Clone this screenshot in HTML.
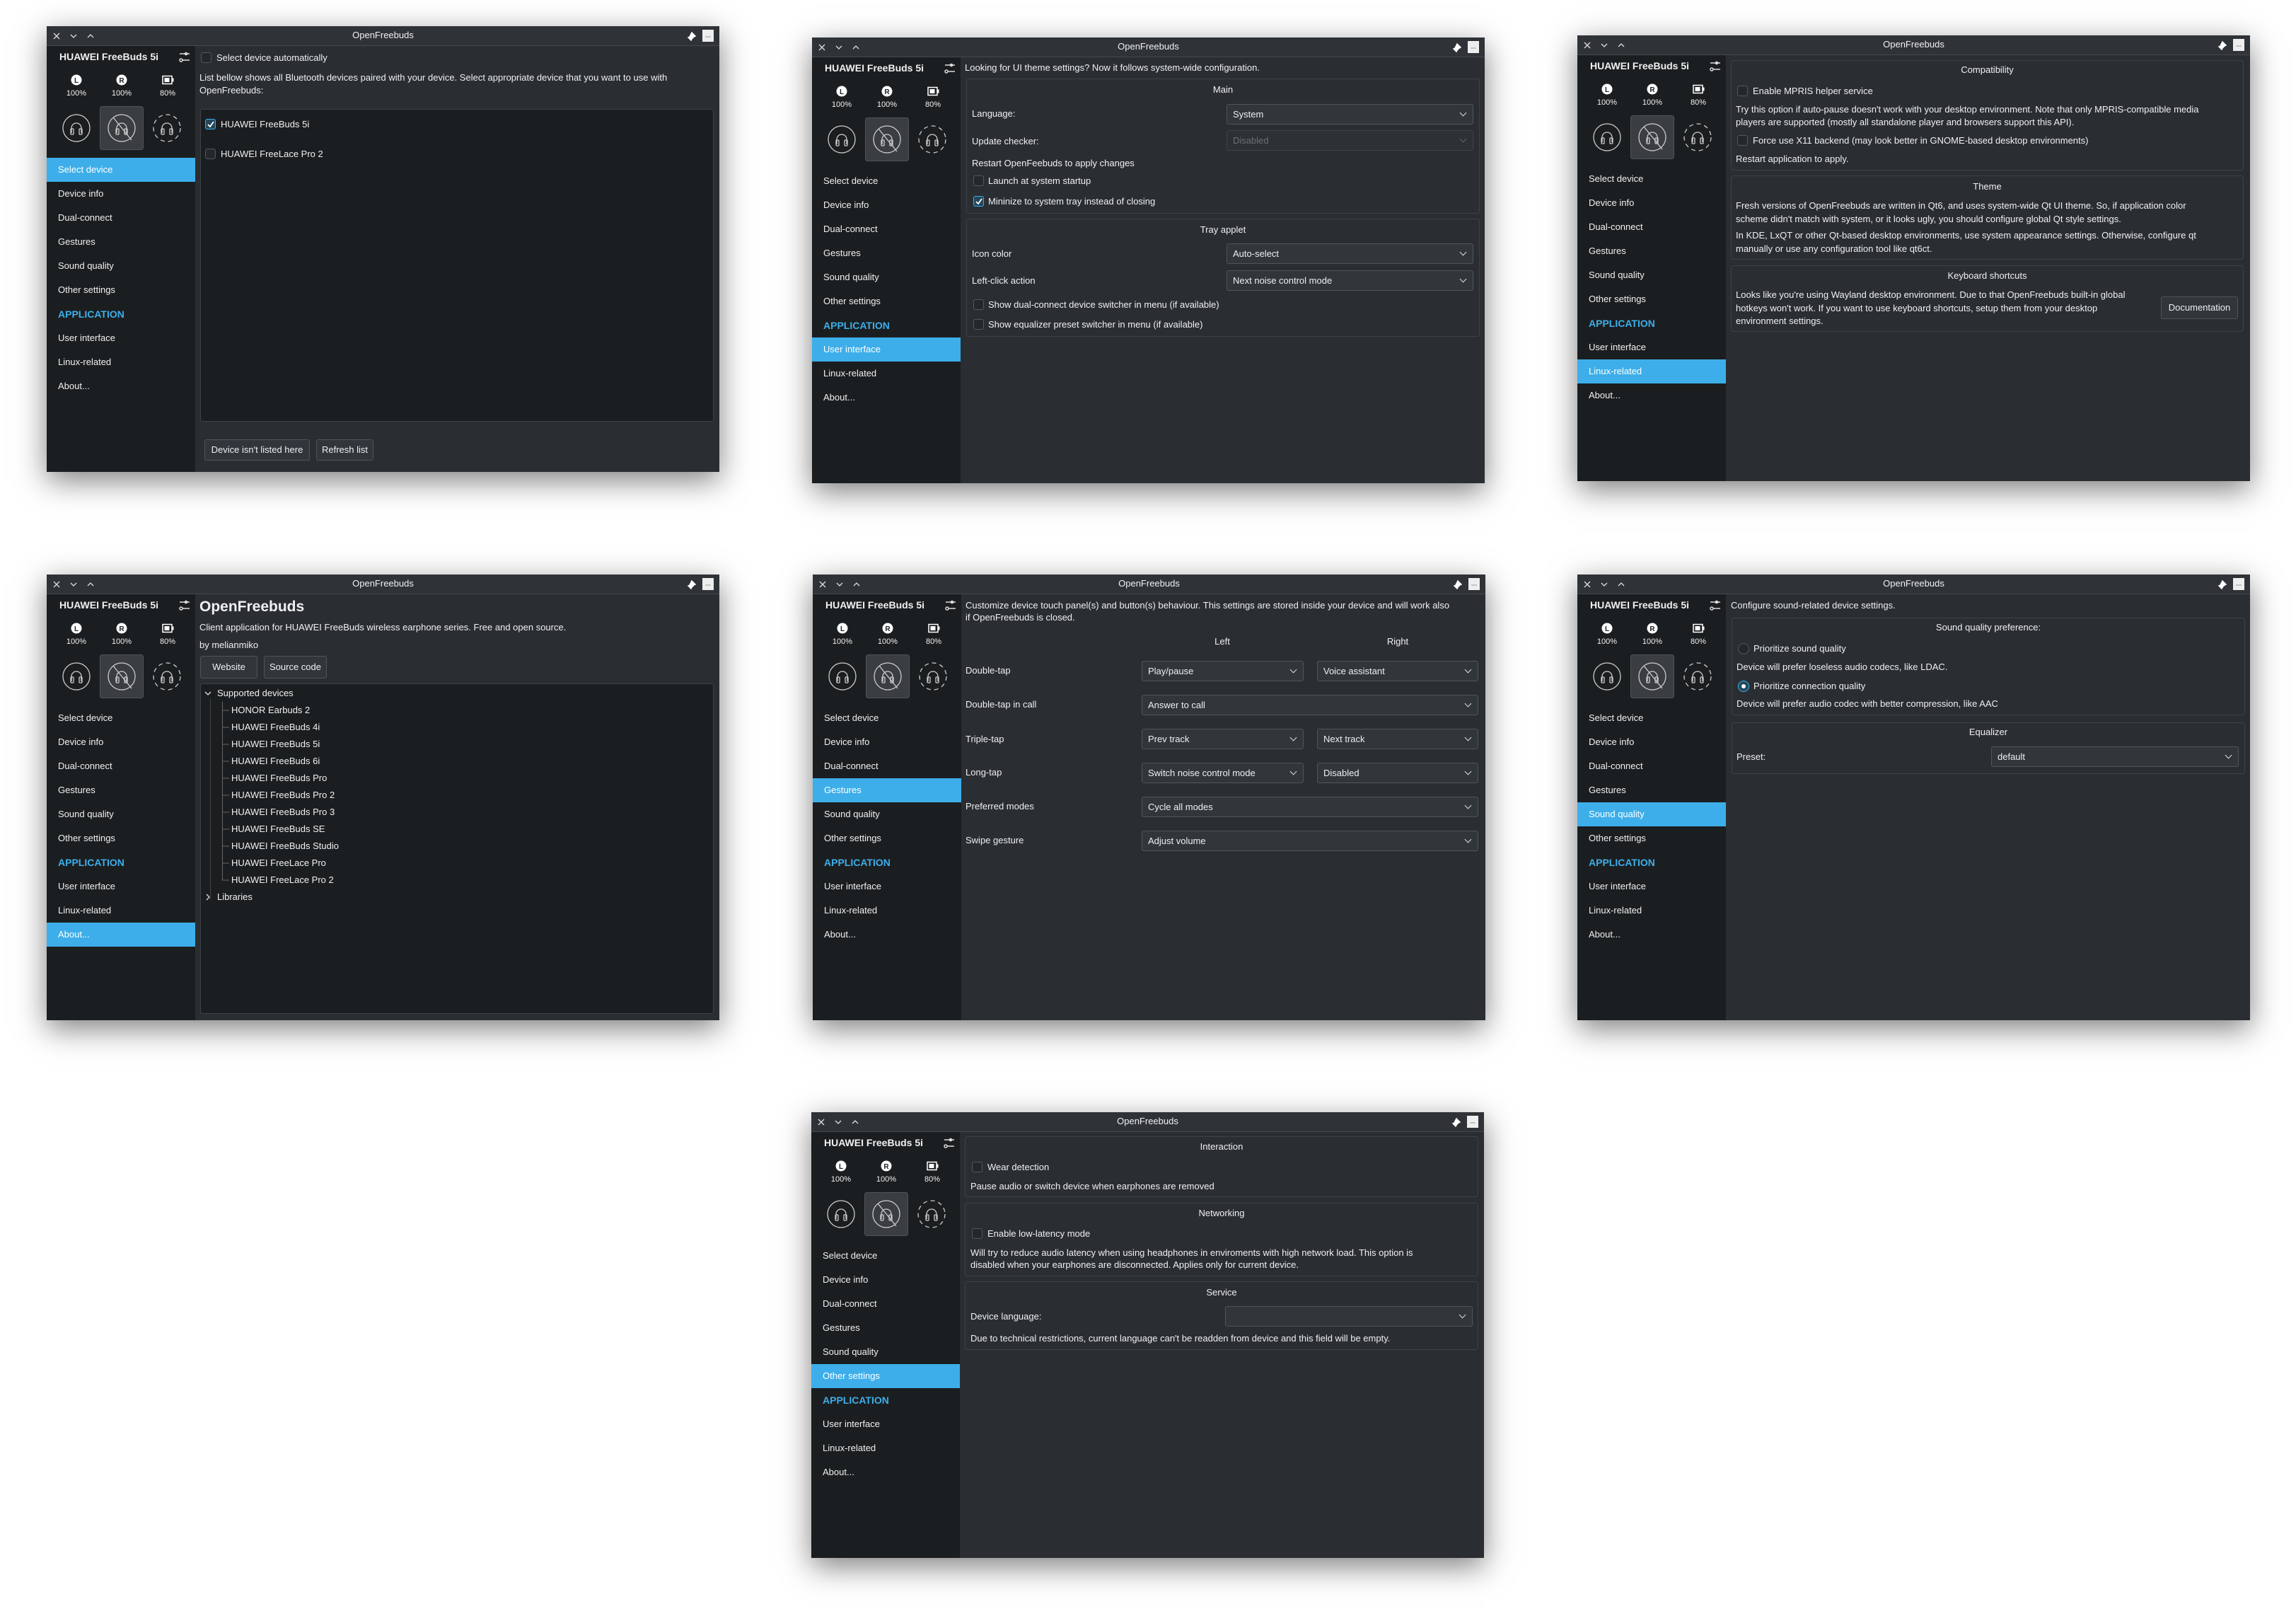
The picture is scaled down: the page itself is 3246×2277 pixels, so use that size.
<!DOCTYPE html>
<html><head><meta charset="utf-8"><style>
*{margin:0;padding:0;box-sizing:border-box}
html,body{width:3246px;height:2277px;background:#ffffff;overflow:hidden}
.w{position:absolute;width:951px;height:630px;background:#2a2e32;box-shadow:0 12px 40px rgba(0,0,0,.5);overflow:hidden;font-family:"Liberation Sans","DejaVu Sans",sans-serif;font-size:13px;color:#eff0f1}
.tb{position:absolute;left:0;top:0;width:951px;height:28px;background:#2f3338;border-bottom:1px solid #45494d}
.ttl{position:absolute;left:0;width:951px;top:5px;text-align:center;font-size:13px;color:#eff0f1}
.sb{position:absolute;left:0;top:28px;width:210px;height:602px;background:#1b1e20}
.sv{position:absolute;left:0;top:0}
.l{position:absolute;white-space:nowrap;line-height:18px}
.hd{font-weight:bold;font-size:14px}
.pc{position:absolute;width:60px;text-align:center;font-size:11px;top:89px;color:#eff0f1}
.nav{position:absolute;left:0;width:210px;height:34px;line-height:34px;padding-left:16px;font-size:13px}
.nav.s{background:#3daee9;color:#fff}
.nav.ap{color:#3daee9;font-weight:bold;font-size:14px}
.g{position:absolute;border:1px solid #3e4246;border-radius:4px}
.gt{position:absolute;text-align:center;white-space:nowrap;line-height:18px}
.cb{position:absolute;width:15px;height:15px;border:1px solid #54585c;border-radius:3px;background:#25282b}
.cb.on{border-color:#3daee9;background:#23475a}
.rd{position:absolute;width:16px;height:16px;border:1px solid #54585c;border-radius:50%;background:#25282b}
.rd.on{border-color:#3daee9;background:#23475a}
.rd.on::after{content:"";position:absolute;left:4px;top:4px;width:6px;height:6px;border-radius:50%;background:#fff}
.co{position:absolute;height:29px;background:#31363b;border:1px solid #50555a;border-radius:3px;line-height:27px;padding-left:8px;white-space:nowrap}
.co::after{content:"";position:absolute;right:10px;top:8px;width:6px;height:6px;border-right:1.3px solid #ddd;border-bottom:1.3px solid #ddd;transform:rotate(45deg)}
.co.dis{color:#6c7074;background:#2d3135;border-color:#3f4347}
.co.dis::after{border-color:#666}
.bt{position:absolute;background:#31363b;border:1px solid #50555a;border-radius:3px;text-align:center;white-space:nowrap}
.box{position:absolute;background:#1b1e20;border:1px solid #3e4246;border-radius:3px}
</style></head><body>

<!-- ===== W1 Select device ===== -->
<div class="w" style="left:66px;top:37px">
<div class="tb"></div>
<svg class="sv" width="951" height="28"><g stroke="#ddd" stroke-width="1.3" fill="none"><path d="M10 10l8 8M18 10l-8 8"/><path d="M34 12l4 4 4-4"/><path d="M58 16l4-4 4 4"/></g><path d="M909 19l5-5M912 9l5 5-2 1-3 3-1 2-4-4 2-1z" stroke="#fff" stroke-width="1.5" fill="#fff"/><rect x="927" y="5" width="16" height="17" fill="#eee"/><line x1="931" y1="15" x2="939" y2="15" stroke="#999"/></svg>
<div class="ttl">OpenFreebuds</div>
<div class="sb"></div>
<svg class="sv" width="210" height="200"><g stroke="#ddd" stroke-width="1.5" fill="none"><line x1="188" y1="39" x2="202" y2="39"/><line x1="192" y1="48" x2="202" y2="48"/><circle cx="190" cy="48" r="2"/></g><circle cx="197" cy="39" r="2.3" fill="#ddd"/><circle cx="42" cy="76" r="7.5" fill="#fff"/><text x="42" y="80" font-size="10" font-weight="bold" text-anchor="middle" fill="#1b1e20" font-family="Liberation Sans">L</text><circle cx="106" cy="76" r="7.5" fill="#fff"/><text x="106" y="80" font-size="10" font-weight="bold" text-anchor="middle" fill="#1b1e20" font-family="Liberation Sans">R</text><rect x="164" y="70.5" width="13" height="11" fill="none" stroke="#fff" stroke-width="1.5"/><rect x="166.5" y="73" width="7" height="6" fill="#fff"/><rect x="177.5" y="73.5" width="2" height="5" fill="#fff"/><rect x="75.5" y="113.5" width="61" height="61" rx="3" fill="#3a3d41" stroke="#505458"/><g stroke="#ccc" stroke-width="1.3" fill="none"><circle cx="42" cy="144" r="19"/><path d="M35 151v-7a7 7 0 0 1 14 0v7"/><rect x="34" y="145" width="4" height="8" rx="1"/><rect x="46" y="145" width="4" height="8" rx="1"/><circle cx="106" cy="144" r="19"/><path d="M99 151v-7a7 7 0 0 1 14 0v7"/><rect x="98" y="145" width="4" height="8" rx="1"/><rect x="110" y="145" width="4" height="8" rx="1"/><line x1="94" y1="129" x2="120" y2="161"/><circle cx="170" cy="144" r="19" stroke-dasharray="6 5"/><path d="M163 151v-7a7 7 0 0 1 14 0v7"/><rect x="162" y="145" width="4" height="8" rx="1"/><rect x="174" y="145" width="4" height="8" rx="1"/></g></svg>
<div class="l hd" style="left:18px;top:34px">HUAWEI FreeBuds 5i</div>
<div class="pc" style="left:12px">100%</div><div class="pc" style="left:76px">100%</div><div class="pc" style="left:141px">80%</div>
<div class="nav s" style="top:186px">Select device</div><div class="nav" style="top:220px">Device info</div><div class="nav" style="top:254px">Dual-connect</div><div class="nav" style="top:288px">Gestures</div><div class="nav" style="top:322px">Sound quality</div><div class="nav" style="top:356px">Other settings</div><div class="nav ap" style="top:390px">APPLICATION</div><div class="nav" style="top:424px">User interface</div><div class="nav" style="top:458px">Linux-related</div><div class="nav" style="top:492px">About...</div>
<div class="cb" style="left:218px;top:37px"></div><div class="l" style="left:240px;top:36px">Select device automatically</div>
<div class="l" style="left:216px;top:64px">List bellow shows all Bluetooth devices paired with your device. Select appropriate device that you want to use with</div>
<div class="l" style="left:216px;top:82px">OpenFreebuds:</div>
<div class="box" style="left:217px;top:117px;width:726px;height:442px"></div>
<div class="cb on" style="left:224px;top:131px"><svg width="13" height="13" style="position:absolute;left:0;top:0"><path d="M3 7l3 3 5-7" stroke="#fff" stroke-width="1.8" fill="none"/></svg></div><div class="l" style="left:246px;top:130px">HUAWEI FreeBuds 5i</div>
<div class="cb" style="left:224px;top:173px"></div><div class="l" style="left:246px;top:172px">HUAWEI FreeLace Pro 2</div>
<div class="bt" style="left:223px;top:584px;width:149px;height:30px;line-height:28px">Device isn't listed here</div>
<div class="bt" style="left:381px;top:584px;width:81px;height:30px;line-height:28px">Refresh list</div>
</div>

<!-- ===== W2 User interface ===== -->
<div class="w" style="left:1148px;top:53px">
<div class="tb"></div>
<svg class="sv" width="951" height="28"><g stroke="#ddd" stroke-width="1.3" fill="none"><path d="M10 10l8 8M18 10l-8 8"/><path d="M34 12l4 4 4-4"/><path d="M58 16l4-4 4 4"/></g><path d="M909 19l5-5M912 9l5 5-2 1-3 3-1 2-4-4 2-1z" stroke="#fff" stroke-width="1.5" fill="#fff"/><rect x="927" y="5" width="16" height="17" fill="#eee"/><line x1="931" y1="15" x2="939" y2="15" stroke="#999"/></svg>
<div class="ttl">OpenFreebuds</div>
<div class="sb"></div>
<svg class="sv" width="210" height="200"><g stroke="#ddd" stroke-width="1.5" fill="none"><line x1="188" y1="39" x2="202" y2="39"/><line x1="192" y1="48" x2="202" y2="48"/><circle cx="190" cy="48" r="2"/></g><circle cx="197" cy="39" r="2.3" fill="#ddd"/><circle cx="42" cy="76" r="7.5" fill="#fff"/><text x="42" y="80" font-size="10" font-weight="bold" text-anchor="middle" fill="#1b1e20" font-family="Liberation Sans">L</text><circle cx="106" cy="76" r="7.5" fill="#fff"/><text x="106" y="80" font-size="10" font-weight="bold" text-anchor="middle" fill="#1b1e20" font-family="Liberation Sans">R</text><rect x="164" y="70.5" width="13" height="11" fill="none" stroke="#fff" stroke-width="1.5"/><rect x="166.5" y="73" width="7" height="6" fill="#fff"/><rect x="177.5" y="73.5" width="2" height="5" fill="#fff"/><rect x="75.5" y="113.5" width="61" height="61" rx="3" fill="#3a3d41" stroke="#505458"/><g stroke="#ccc" stroke-width="1.3" fill="none"><circle cx="42" cy="144" r="19"/><path d="M35 151v-7a7 7 0 0 1 14 0v7"/><rect x="34" y="145" width="4" height="8" rx="1"/><rect x="46" y="145" width="4" height="8" rx="1"/><circle cx="106" cy="144" r="19"/><path d="M99 151v-7a7 7 0 0 1 14 0v7"/><rect x="98" y="145" width="4" height="8" rx="1"/><rect x="110" y="145" width="4" height="8" rx="1"/><line x1="94" y1="129" x2="120" y2="161"/><circle cx="170" cy="144" r="19" stroke-dasharray="6 5"/><path d="M163 151v-7a7 7 0 0 1 14 0v7"/><rect x="162" y="145" width="4" height="8" rx="1"/><rect x="174" y="145" width="4" height="8" rx="1"/></g></svg>
<div class="l hd" style="left:18px;top:34px">HUAWEI FreeBuds 5i</div>
<div class="pc" style="left:12px">100%</div><div class="pc" style="left:76px">100%</div><div class="pc" style="left:141px">80%</div>
<div class="nav" style="top:186px">Select device</div><div class="nav" style="top:220px">Device info</div><div class="nav" style="top:254px">Dual-connect</div><div class="nav" style="top:288px">Gestures</div><div class="nav" style="top:322px">Sound quality</div><div class="nav" style="top:356px">Other settings</div><div class="nav ap" style="top:390px">APPLICATION</div><div class="nav s" style="top:424px">User interface</div><div class="nav" style="top:458px">Linux-related</div><div class="nav" style="top:492px">About...</div>
<div class="l" style="left:216px;top:34px">Looking for UI theme settings? Now it follows system-wide configuration.</div>
<div class="g" style="left:218px;top:58px;width:726px;height:191px"></div>
<div class="gt" style="left:218px;width:726px;top:65px">Main</div>
<div class="l" style="left:226px;top:99px">Language:</div><div class="co" style="left:586px;top:94px;width:349px">System</div>
<div class="l" style="left:226px;top:138px">Update checker:</div><div class="co dis" style="left:586px;top:131px;width:349px">Disabled</div>
<div class="l" style="left:226px;top:169px">Restart OpenFeebuds to apply changes</div>
<div class="cb" style="left:228px;top:195px"></div><div class="l" style="left:249px;top:194px">Launch at system startup</div>
<div class="cb on" style="left:228px;top:224px"><svg width="13" height="13" style="position:absolute;left:0;top:0"><path d="M3 7l3 3 5-7" stroke="#fff" stroke-width="1.8" fill="none"/></svg></div><div class="l" style="left:249px;top:223px">Mininize to system tray instead of closing</div>
<div class="g" style="left:218px;top:256px;width:726px;height:167px"></div>
<div class="gt" style="left:218px;width:726px;top:263px">Tray applet</div>
<div class="l" style="left:226px;top:297px">Icon color</div><div class="co" style="left:586px;top:291px;width:349px">Auto-select</div>
<div class="l" style="left:226px;top:335px">Left-click action</div><div class="co" style="left:586px;top:329px;width:349px">Next noise control mode</div>
<div class="cb" style="left:228px;top:370px"></div><div class="l" style="left:249px;top:369px">Show dual-connect device switcher in menu (if available)</div>
<div class="cb" style="left:228px;top:398px"></div><div class="l" style="left:249px;top:397px">Show equalizer preset switcher in menu (if available)</div>
</div>

<!-- ===== W3 Linux-related ===== -->
<div class="w" style="left:2230px;top:50px">
<div class="tb"></div>
<svg class="sv" width="951" height="28"><g stroke="#ddd" stroke-width="1.3" fill="none"><path d="M10 10l8 8M18 10l-8 8"/><path d="M34 12l4 4 4-4"/><path d="M58 16l4-4 4 4"/></g><path d="M909 19l5-5M912 9l5 5-2 1-3 3-1 2-4-4 2-1z" stroke="#fff" stroke-width="1.5" fill="#fff"/><rect x="927" y="5" width="16" height="17" fill="#eee"/><line x1="931" y1="15" x2="939" y2="15" stroke="#999"/></svg>
<div class="ttl">OpenFreebuds</div>
<div class="sb"></div>
<svg class="sv" width="210" height="200"><g stroke="#ddd" stroke-width="1.5" fill="none"><line x1="188" y1="39" x2="202" y2="39"/><line x1="192" y1="48" x2="202" y2="48"/><circle cx="190" cy="48" r="2"/></g><circle cx="197" cy="39" r="2.3" fill="#ddd"/><circle cx="42" cy="76" r="7.5" fill="#fff"/><text x="42" y="80" font-size="10" font-weight="bold" text-anchor="middle" fill="#1b1e20" font-family="Liberation Sans">L</text><circle cx="106" cy="76" r="7.5" fill="#fff"/><text x="106" y="80" font-size="10" font-weight="bold" text-anchor="middle" fill="#1b1e20" font-family="Liberation Sans">R</text><rect x="164" y="70.5" width="13" height="11" fill="none" stroke="#fff" stroke-width="1.5"/><rect x="166.5" y="73" width="7" height="6" fill="#fff"/><rect x="177.5" y="73.5" width="2" height="5" fill="#fff"/><rect x="75.5" y="113.5" width="61" height="61" rx="3" fill="#3a3d41" stroke="#505458"/><g stroke="#ccc" stroke-width="1.3" fill="none"><circle cx="42" cy="144" r="19"/><path d="M35 151v-7a7 7 0 0 1 14 0v7"/><rect x="34" y="145" width="4" height="8" rx="1"/><rect x="46" y="145" width="4" height="8" rx="1"/><circle cx="106" cy="144" r="19"/><path d="M99 151v-7a7 7 0 0 1 14 0v7"/><rect x="98" y="145" width="4" height="8" rx="1"/><rect x="110" y="145" width="4" height="8" rx="1"/><line x1="94" y1="129" x2="120" y2="161"/><circle cx="170" cy="144" r="19" stroke-dasharray="6 5"/><path d="M163 151v-7a7 7 0 0 1 14 0v7"/><rect x="162" y="145" width="4" height="8" rx="1"/><rect x="174" y="145" width="4" height="8" rx="1"/></g></svg>
<div class="l hd" style="left:18px;top:34px">HUAWEI FreeBuds 5i</div>
<div class="pc" style="left:12px">100%</div><div class="pc" style="left:76px">100%</div><div class="pc" style="left:141px">80%</div>
<div class="nav" style="top:186px">Select device</div><div class="nav" style="top:220px">Device info</div><div class="nav" style="top:254px">Dual-connect</div><div class="nav" style="top:288px">Gestures</div><div class="nav" style="top:322px">Sound quality</div><div class="nav" style="top:356px">Other settings</div><div class="nav ap" style="top:390px">APPLICATION</div><div class="nav" style="top:424px">User interface</div><div class="nav s" style="top:458px">Linux-related</div><div class="nav" style="top:492px">About...</div>
<div class="g" style="left:217px;top:35px;width:725px;height:156px"></div>
<div class="gt" style="left:217px;width:725px;top:40px">Compatibility</div>
<div class="cb" style="left:226px;top:71px"></div><div class="l" style="left:248px;top:70px">Enable MPRIS helper service</div>
<div class="l" style="left:224px;top:96px">Try this option if auto-pause doesn't work with your desktop environment. Note that only MPRIS-compatible media</div>
<div class="l" style="left:224px;top:114px">players are supported (mostly all standalone player and browsers support this API).</div>
<div class="cb" style="left:226px;top:141px"></div><div class="l" style="left:248px;top:140px">Force use X11 backend (may look better in GNOME-based desktop environments)</div>
<div class="l" style="left:224px;top:166px">Restart application to apply.</div>
<div class="g" style="left:217px;top:198px;width:725px;height:119px"></div>
<div class="gt" style="left:217px;width:725px;top:205px">Theme</div>
<div class="l" style="left:224px;top:232px">Fresh versions of OpenFreebuds are written in Qt6, and uses system-wide Qt UI theme. So, if application color</div>
<div class="l" style="left:224px;top:251px">scheme didn't match with system, or it looks ugly, you should configure global Qt style settings.</div>
<div class="l" style="left:224px;top:274px">In KDE, LxQT or other Qt-based desktop environments, use system appearance settings. Otherwise, configure qt</div>
<div class="l" style="left:224px;top:293px">manually or use any configuration tool like qt6ct.</div>
<div class="g" style="left:217px;top:325px;width:725px;height:94px"></div>
<div class="gt" style="left:217px;width:725px;top:331px">Keyboard shortcuts</div>
<div class="l" style="left:224px;top:358px">Looks like you're using Wayland desktop environment. Due to that OpenFreebuds built-in global</div>
<div class="l" style="left:224px;top:377px">hotkeys won't work. If you want to use keyboard shortcuts, setup them from your desktop</div>
<div class="l" style="left:224px;top:395px">environment settings.</div>
<div class="bt" style="left:825px;top:369px;width:109px;height:32px;line-height:30px">Documentation</div>
</div>

<!-- ===== W4 About ===== -->
<div class="w" style="left:66px;top:812px">
<div class="tb"></div>
<svg class="sv" width="951" height="28"><g stroke="#ddd" stroke-width="1.3" fill="none"><path d="M10 10l8 8M18 10l-8 8"/><path d="M34 12l4 4 4-4"/><path d="M58 16l4-4 4 4"/></g><path d="M909 19l5-5M912 9l5 5-2 1-3 3-1 2-4-4 2-1z" stroke="#fff" stroke-width="1.5" fill="#fff"/><rect x="927" y="5" width="16" height="17" fill="#eee"/><line x1="931" y1="15" x2="939" y2="15" stroke="#999"/></svg>
<div class="ttl">OpenFreebuds</div>
<div class="sb"></div>
<svg class="sv" width="210" height="200"><g stroke="#ddd" stroke-width="1.5" fill="none"><line x1="188" y1="39" x2="202" y2="39"/><line x1="192" y1="48" x2="202" y2="48"/><circle cx="190" cy="48" r="2"/></g><circle cx="197" cy="39" r="2.3" fill="#ddd"/><circle cx="42" cy="76" r="7.5" fill="#fff"/><text x="42" y="80" font-size="10" font-weight="bold" text-anchor="middle" fill="#1b1e20" font-family="Liberation Sans">L</text><circle cx="106" cy="76" r="7.5" fill="#fff"/><text x="106" y="80" font-size="10" font-weight="bold" text-anchor="middle" fill="#1b1e20" font-family="Liberation Sans">R</text><rect x="164" y="70.5" width="13" height="11" fill="none" stroke="#fff" stroke-width="1.5"/><rect x="166.5" y="73" width="7" height="6" fill="#fff"/><rect x="177.5" y="73.5" width="2" height="5" fill="#fff"/><rect x="75.5" y="113.5" width="61" height="61" rx="3" fill="#3a3d41" stroke="#505458"/><g stroke="#ccc" stroke-width="1.3" fill="none"><circle cx="42" cy="144" r="19"/><path d="M35 151v-7a7 7 0 0 1 14 0v7"/><rect x="34" y="145" width="4" height="8" rx="1"/><rect x="46" y="145" width="4" height="8" rx="1"/><circle cx="106" cy="144" r="19"/><path d="M99 151v-7a7 7 0 0 1 14 0v7"/><rect x="98" y="145" width="4" height="8" rx="1"/><rect x="110" y="145" width="4" height="8" rx="1"/><line x1="94" y1="129" x2="120" y2="161"/><circle cx="170" cy="144" r="19" stroke-dasharray="6 5"/><path d="M163 151v-7a7 7 0 0 1 14 0v7"/><rect x="162" y="145" width="4" height="8" rx="1"/><rect x="174" y="145" width="4" height="8" rx="1"/></g></svg>
<div class="l hd" style="left:18px;top:34px">HUAWEI FreeBuds 5i</div>
<div class="pc" style="left:12px">100%</div><div class="pc" style="left:76px">100%</div><div class="pc" style="left:141px">80%</div>
<div class="nav" style="top:186px">Select device</div><div class="nav" style="top:220px">Device info</div><div class="nav" style="top:254px">Dual-connect</div><div class="nav" style="top:288px">Gestures</div><div class="nav" style="top:322px">Sound quality</div><div class="nav" style="top:356px">Other settings</div><div class="nav ap" style="top:390px">APPLICATION</div><div class="nav" style="top:424px">User interface</div><div class="nav" style="top:458px">Linux-related</div><div class="nav s" style="top:492px">About...</div>
<div class="l" style="left:216px;top:33px;font-size:21px;font-weight:bold;line-height:26px">OpenFreebuds</div>
<div class="l" style="left:216px;top:66px">Client application for HUAWEI FreeBuds wireless earphone series. Free and open source.</div>
<div class="l" style="left:216px;top:91px">by melianmiko</div>
<div class="bt" style="left:217px;top:115px;width:81px;height:32px;line-height:30px">Website</div>
<div class="bt" style="left:307px;top:115px;width:89px;height:32px;line-height:30px">Source code</div>
<div class="box" style="left:217px;top:154px;width:726px;height:467px"></div>
<svg class="sv" width="951" height="630"><g stroke="#666" stroke-width="1" fill="none"><line x1="231.5" y1="176" x2="231.5" y2="460" stroke="#444"/><line x1="248.5" y1="180" x2="248.5" y2="432"/><path d="M248 192h10M248 216h10M248 240h10M248 264h10M248 288h10M248 312h10M248 336h10M248 360h10M248 384h10M248 408h10M248 432h10"/></g><path d="M224 166l4 4 4-4" stroke="#ddd" stroke-width="1.3" fill="none"/><path d="M226 452l4 4-4 4" stroke="#ddd" stroke-width="1.3" fill="none"/></svg>
<div class="l" style="left:241px;top:159px">Supported devices</div>
<div class="l" style="left:261px;top:183px">HONOR Earbuds 2</div>
<div class="l" style="left:261px;top:207px">HUAWEI FreeBuds 4i</div>
<div class="l" style="left:261px;top:231px">HUAWEI FreeBuds 5i</div>
<div class="l" style="left:261px;top:255px">HUAWEI FreeBuds 6i</div>
<div class="l" style="left:261px;top:279px">HUAWEI FreeBuds Pro</div>
<div class="l" style="left:261px;top:303px">HUAWEI FreeBuds Pro 2</div>
<div class="l" style="left:261px;top:327px">HUAWEI FreeBuds Pro 3</div>
<div class="l" style="left:261px;top:351px">HUAWEI FreeBuds SE</div>
<div class="l" style="left:261px;top:375px">HUAWEI FreeBuds Studio</div>
<div class="l" style="left:261px;top:399px">HUAWEI FreeLace Pro</div>
<div class="l" style="left:261px;top:423px">HUAWEI FreeLace Pro 2</div>
<div class="l" style="left:241px;top:447px">Libraries</div>
</div>

<!-- ===== W5 Gestures ===== -->
<div class="w" style="left:1149px;top:812px">
<div class="tb"></div>
<svg class="sv" width="951" height="28"><g stroke="#ddd" stroke-width="1.3" fill="none"><path d="M10 10l8 8M18 10l-8 8"/><path d="M34 12l4 4 4-4"/><path d="M58 16l4-4 4 4"/></g><path d="M909 19l5-5M912 9l5 5-2 1-3 3-1 2-4-4 2-1z" stroke="#fff" stroke-width="1.5" fill="#fff"/><rect x="927" y="5" width="16" height="17" fill="#eee"/><line x1="931" y1="15" x2="939" y2="15" stroke="#999"/></svg>
<div class="ttl">OpenFreebuds</div>
<div class="sb"></div>
<svg class="sv" width="210" height="200"><g stroke="#ddd" stroke-width="1.5" fill="none"><line x1="188" y1="39" x2="202" y2="39"/><line x1="192" y1="48" x2="202" y2="48"/><circle cx="190" cy="48" r="2"/></g><circle cx="197" cy="39" r="2.3" fill="#ddd"/><circle cx="42" cy="76" r="7.5" fill="#fff"/><text x="42" y="80" font-size="10" font-weight="bold" text-anchor="middle" fill="#1b1e20" font-family="Liberation Sans">L</text><circle cx="106" cy="76" r="7.5" fill="#fff"/><text x="106" y="80" font-size="10" font-weight="bold" text-anchor="middle" fill="#1b1e20" font-family="Liberation Sans">R</text><rect x="164" y="70.5" width="13" height="11" fill="none" stroke="#fff" stroke-width="1.5"/><rect x="166.5" y="73" width="7" height="6" fill="#fff"/><rect x="177.5" y="73.5" width="2" height="5" fill="#fff"/><rect x="75.5" y="113.5" width="61" height="61" rx="3" fill="#3a3d41" stroke="#505458"/><g stroke="#ccc" stroke-width="1.3" fill="none"><circle cx="42" cy="144" r="19"/><path d="M35 151v-7a7 7 0 0 1 14 0v7"/><rect x="34" y="145" width="4" height="8" rx="1"/><rect x="46" y="145" width="4" height="8" rx="1"/><circle cx="106" cy="144" r="19"/><path d="M99 151v-7a7 7 0 0 1 14 0v7"/><rect x="98" y="145" width="4" height="8" rx="1"/><rect x="110" y="145" width="4" height="8" rx="1"/><line x1="94" y1="129" x2="120" y2="161"/><circle cx="170" cy="144" r="19" stroke-dasharray="6 5"/><path d="M163 151v-7a7 7 0 0 1 14 0v7"/><rect x="162" y="145" width="4" height="8" rx="1"/><rect x="174" y="145" width="4" height="8" rx="1"/></g></svg>
<div class="l hd" style="left:18px;top:34px">HUAWEI FreeBuds 5i</div>
<div class="pc" style="left:12px">100%</div><div class="pc" style="left:76px">100%</div><div class="pc" style="left:141px">80%</div>
<div class="nav" style="top:186px">Select device</div><div class="nav" style="top:220px">Device info</div><div class="nav" style="top:254px">Dual-connect</div><div class="nav s" style="top:288px">Gestures</div><div class="nav" style="top:322px">Sound quality</div><div class="nav" style="top:356px">Other settings</div><div class="nav ap" style="top:390px">APPLICATION</div><div class="nav" style="top:424px">User interface</div><div class="nav" style="top:458px">Linux-related</div><div class="nav" style="top:492px">About...</div>
<div class="l" style="left:216px;top:35px">Customize device touch panel(s) and button(s) behaviour. This settings are stored inside your device and will work also</div>
<div class="l" style="left:216px;top:52px">if OpenFreebuds is closed.</div>
<div class="gt" style="left:529px;width:100px;top:86px">Left</div>
<div class="gt" style="left:777px;width:100px;top:86px">Right</div>
<div class="l" style="left:216px;top:127px">Double-tap</div><div class="co" style="left:465px;top:122px;width:229px">Play/pause</div><div class="co" style="left:713px;top:122px;width:228px">Voice assistant</div>
<div class="l" style="left:216px;top:175px">Double-tap in call</div><div class="co" style="left:465px;top:170px;width:476px">Answer to call</div>
<div class="l" style="left:216px;top:224px">Triple-tap</div><div class="co" style="left:465px;top:218px;width:229px">Prev track</div><div class="co" style="left:713px;top:218px;width:228px">Next track</div>
<div class="l" style="left:216px;top:271px">Long-tap</div><div class="co" style="left:465px;top:266px;width:229px">Switch noise control mode</div><div class="co" style="left:713px;top:266px;width:228px">Disabled</div>
<div class="l" style="left:216px;top:319px">Preferred modes</div><div class="co" style="left:465px;top:314px;width:476px">Cycle all modes</div>
<div class="l" style="left:216px;top:367px">Swipe gesture</div><div class="co" style="left:465px;top:362px;width:476px">Adjust volume</div>
</div>

<!-- ===== W6 Sound quality ===== -->
<div class="w" style="left:2230px;top:812px">
<div class="tb"></div>
<svg class="sv" width="951" height="28"><g stroke="#ddd" stroke-width="1.3" fill="none"><path d="M10 10l8 8M18 10l-8 8"/><path d="M34 12l4 4 4-4"/><path d="M58 16l4-4 4 4"/></g><path d="M909 19l5-5M912 9l5 5-2 1-3 3-1 2-4-4 2-1z" stroke="#fff" stroke-width="1.5" fill="#fff"/><rect x="927" y="5" width="16" height="17" fill="#eee"/><line x1="931" y1="15" x2="939" y2="15" stroke="#999"/></svg>
<div class="ttl">OpenFreebuds</div>
<div class="sb"></div>
<svg class="sv" width="210" height="200"><g stroke="#ddd" stroke-width="1.5" fill="none"><line x1="188" y1="39" x2="202" y2="39"/><line x1="192" y1="48" x2="202" y2="48"/><circle cx="190" cy="48" r="2"/></g><circle cx="197" cy="39" r="2.3" fill="#ddd"/><circle cx="42" cy="76" r="7.5" fill="#fff"/><text x="42" y="80" font-size="10" font-weight="bold" text-anchor="middle" fill="#1b1e20" font-family="Liberation Sans">L</text><circle cx="106" cy="76" r="7.5" fill="#fff"/><text x="106" y="80" font-size="10" font-weight="bold" text-anchor="middle" fill="#1b1e20" font-family="Liberation Sans">R</text><rect x="164" y="70.5" width="13" height="11" fill="none" stroke="#fff" stroke-width="1.5"/><rect x="166.5" y="73" width="7" height="6" fill="#fff"/><rect x="177.5" y="73.5" width="2" height="5" fill="#fff"/><rect x="75.5" y="113.5" width="61" height="61" rx="3" fill="#3a3d41" stroke="#505458"/><g stroke="#ccc" stroke-width="1.3" fill="none"><circle cx="42" cy="144" r="19"/><path d="M35 151v-7a7 7 0 0 1 14 0v7"/><rect x="34" y="145" width="4" height="8" rx="1"/><rect x="46" y="145" width="4" height="8" rx="1"/><circle cx="106" cy="144" r="19"/><path d="M99 151v-7a7 7 0 0 1 14 0v7"/><rect x="98" y="145" width="4" height="8" rx="1"/><rect x="110" y="145" width="4" height="8" rx="1"/><line x1="94" y1="129" x2="120" y2="161"/><circle cx="170" cy="144" r="19" stroke-dasharray="6 5"/><path d="M163 151v-7a7 7 0 0 1 14 0v7"/><rect x="162" y="145" width="4" height="8" rx="1"/><rect x="174" y="145" width="4" height="8" rx="1"/></g></svg>
<div class="l hd" style="left:18px;top:34px">HUAWEI FreeBuds 5i</div>
<div class="pc" style="left:12px">100%</div><div class="pc" style="left:76px">100%</div><div class="pc" style="left:141px">80%</div>
<div class="nav" style="top:186px">Select device</div><div class="nav" style="top:220px">Device info</div><div class="nav" style="top:254px">Dual-connect</div><div class="nav" style="top:288px">Gestures</div><div class="nav s" style="top:322px">Sound quality</div><div class="nav" style="top:356px">Other settings</div><div class="nav ap" style="top:390px">APPLICATION</div><div class="nav" style="top:424px">User interface</div><div class="nav" style="top:458px">Linux-related</div><div class="nav" style="top:492px">About...</div>
<div class="l" style="left:217px;top:35px">Configure sound-related device settings.</div>
<div class="g" style="left:218px;top:61px;width:726px;height:138px"></div>
<div class="gt" style="left:218px;width:726px;top:66px">Sound quality preference:</div>
<div class="rd" style="left:227px;top:97px"></div><div class="l" style="left:249px;top:96px">Prioritize sound quality</div>
<div class="l" style="left:225px;top:122px">Device will prefer loseless audio codecs, like LDAC.</div>
<div class="rd on" style="left:227px;top:150px"></div><div class="l" style="left:249px;top:149px">Prioritize connection quality</div>
<div class="l" style="left:225px;top:174px">Device will prefer audio codec with better compression, like AAC</div>
<div class="g" style="left:218px;top:209px;width:726px;height:73px"></div>
<div class="gt" style="left:218px;width:726px;top:214px">Equalizer</div>
<div class="l" style="left:225px;top:249px">Preset:</div><div class="co" style="left:585px;top:243px;width:350px">default</div>
</div>

<!-- ===== W7 Other settings ===== -->
<div class="w" style="left:1147px;top:1572px">
<div class="tb"></div>
<svg class="sv" width="951" height="28"><g stroke="#ddd" stroke-width="1.3" fill="none"><path d="M10 10l8 8M18 10l-8 8"/><path d="M34 12l4 4 4-4"/><path d="M58 16l4-4 4 4"/></g><path d="M909 19l5-5M912 9l5 5-2 1-3 3-1 2-4-4 2-1z" stroke="#fff" stroke-width="1.5" fill="#fff"/><rect x="927" y="5" width="16" height="17" fill="#eee"/><line x1="931" y1="15" x2="939" y2="15" stroke="#999"/></svg>
<div class="ttl">OpenFreebuds</div>
<div class="sb"></div>
<svg class="sv" width="210" height="200"><g stroke="#ddd" stroke-width="1.5" fill="none"><line x1="188" y1="39" x2="202" y2="39"/><line x1="192" y1="48" x2="202" y2="48"/><circle cx="190" cy="48" r="2"/></g><circle cx="197" cy="39" r="2.3" fill="#ddd"/><circle cx="42" cy="76" r="7.5" fill="#fff"/><text x="42" y="80" font-size="10" font-weight="bold" text-anchor="middle" fill="#1b1e20" font-family="Liberation Sans">L</text><circle cx="106" cy="76" r="7.5" fill="#fff"/><text x="106" y="80" font-size="10" font-weight="bold" text-anchor="middle" fill="#1b1e20" font-family="Liberation Sans">R</text><rect x="164" y="70.5" width="13" height="11" fill="none" stroke="#fff" stroke-width="1.5"/><rect x="166.5" y="73" width="7" height="6" fill="#fff"/><rect x="177.5" y="73.5" width="2" height="5" fill="#fff"/><rect x="75.5" y="113.5" width="61" height="61" rx="3" fill="#3a3d41" stroke="#505458"/><g stroke="#ccc" stroke-width="1.3" fill="none"><circle cx="42" cy="144" r="19"/><path d="M35 151v-7a7 7 0 0 1 14 0v7"/><rect x="34" y="145" width="4" height="8" rx="1"/><rect x="46" y="145" width="4" height="8" rx="1"/><circle cx="106" cy="144" r="19"/><path d="M99 151v-7a7 7 0 0 1 14 0v7"/><rect x="98" y="145" width="4" height="8" rx="1"/><rect x="110" y="145" width="4" height="8" rx="1"/><line x1="94" y1="129" x2="120" y2="161"/><circle cx="170" cy="144" r="19" stroke-dasharray="6 5"/><path d="M163 151v-7a7 7 0 0 1 14 0v7"/><rect x="162" y="145" width="4" height="8" rx="1"/><rect x="174" y="145" width="4" height="8" rx="1"/></g></svg>
<div class="l hd" style="left:18px;top:34px">HUAWEI FreeBuds 5i</div>
<div class="pc" style="left:12px">100%</div><div class="pc" style="left:76px">100%</div><div class="pc" style="left:141px">80%</div>
<div class="nav" style="top:186px">Select device</div><div class="nav" style="top:220px">Device info</div><div class="nav" style="top:254px">Dual-connect</div><div class="nav" style="top:288px">Gestures</div><div class="nav" style="top:322px">Sound quality</div><div class="nav s" style="top:356px">Other settings</div><div class="nav ap" style="top:390px">APPLICATION</div><div class="nav" style="top:424px">User interface</div><div class="nav" style="top:458px">Linux-related</div><div class="nav" style="top:492px">About...</div>
<div class="g" style="left:217px;top:34px;width:726px;height:86px"></div>
<div class="gt" style="left:217px;width:726px;top:40px">Interaction</div>
<div class="cb" style="left:227px;top:70px"></div><div class="l" style="left:249px;top:69px">Wear detection</div>
<div class="l" style="left:225px;top:96px">Pause audio or switch device when earphones are removed</div>
<div class="g" style="left:217px;top:128px;width:726px;height:104px"></div>
<div class="gt" style="left:217px;width:726px;top:134px">Networking</div>
<div class="cb" style="left:227px;top:164px"></div><div class="l" style="left:249px;top:163px">Enable low-latency mode</div>
<div class="l" style="left:225px;top:190px">Will try to reduce audio latency when using headphones in enviroments with high network load. This option is</div>
<div class="l" style="left:225px;top:207px">disabled when your earphones are disconnected. Applies only for current device.</div>
<div class="g" style="left:217px;top:239px;width:726px;height:97px"></div>
<div class="gt" style="left:217px;width:726px;top:246px">Service</div>
<div class="l" style="left:225px;top:280px">Device language:</div><div class="co" style="left:585px;top:274px;width:350px"></div>
<div class="l" style="left:225px;top:311px">Due to technical restrictions, current language can't be readden from device and this field will be empty.</div>
</div>

</body></html>
